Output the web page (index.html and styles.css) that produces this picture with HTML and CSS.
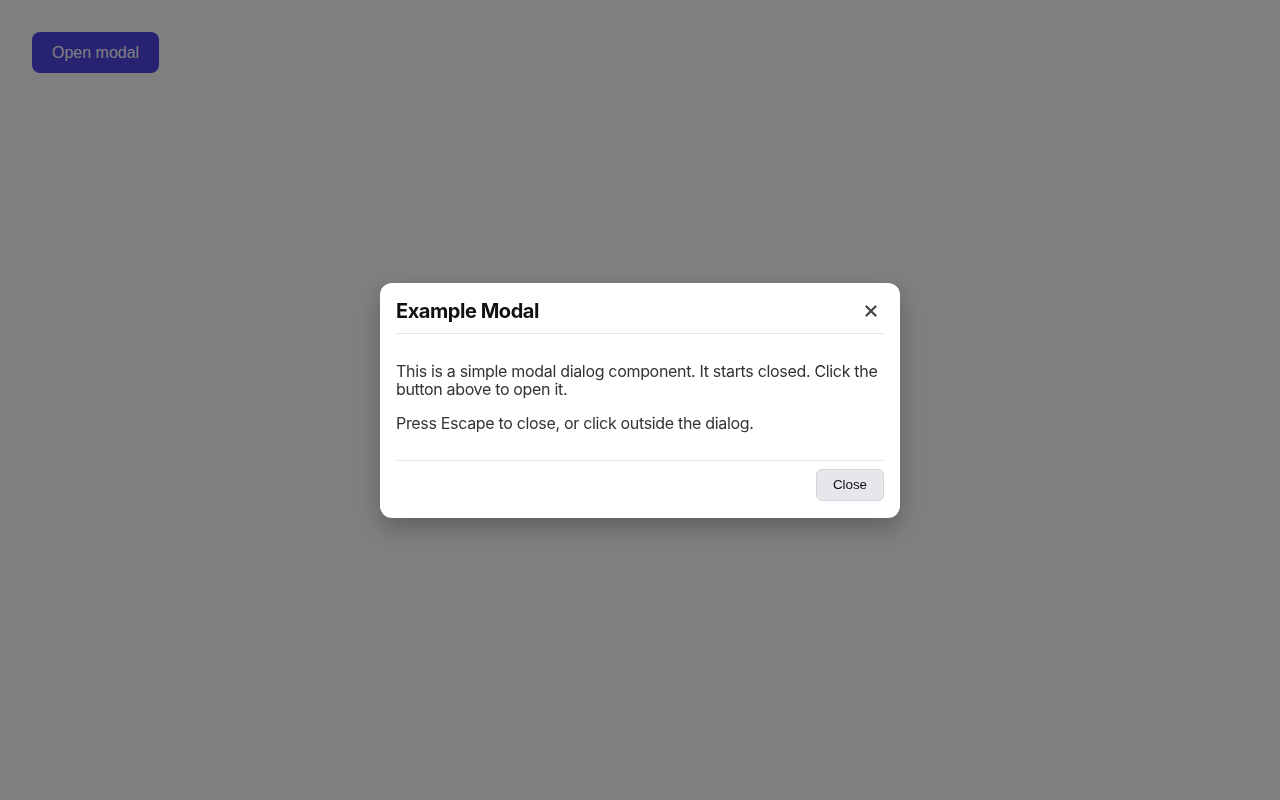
FILE: index.html
```html
<!DOCTYPE html>
<html lang="en">
<head>
<meta charset="utf-8">
<title>Modal</title>
<link rel="stylesheet" href="styles.css">
</head>
<body>
  <div class="page">
    <button class="open-btn" type="button">Open modal</button>
  </div>
  <div class="overlay">
    <div class="modal" role="dialog" aria-labelledby="modal-title">
      <div class="modal-header">
        <h2 id="modal-title" class="modal-title">Example Modal</h2>
        <button class="icon-close" type="button" aria-label="Close">
          <svg width="12" height="12" viewBox="0 0 12 12" aria-hidden="true">
            <path d="M1.5 1.5 L10.5 10.5 M10.5 1.5 L1.5 10.5" stroke="#444" stroke-width="2.2" stroke-linecap="round"/>
          </svg>
        </button>
      </div>
      <div class="modal-body">
        <p>This is a simple modal dialog component. It starts closed. Click the button above to open it.</p>
        <p>Press Escape to close, or click outside the dialog.</p>
      </div>
      <div class="modal-footer">
        <button class="btn-close" type="button">Close</button>
      </div>
    </div>
  </div>
</body>
</html>
```

FILE: styles.css
```css
html, body {
  margin: 0;
  padding: 0;
  height: 100%;
}

body {
  background: #ffffff;
  font-family: Inter, "Noto Sans", "Liberation Sans", sans-serif;
}

.page {
  padding: 32px;
}

.open-btn {
  font-family: "Liberation Sans", Arial, sans-serif;
  font-size: 16px;
  line-height: 19px;
  color: #ffffff;
  background: #4f46e5;
  border: none;
  border-radius: 8px;
  padding: 11px 20px;
  cursor: pointer;
}

.overlay {
  position: fixed;
  inset: 0;
  background: rgba(0, 0, 0, 0.5);
  display: flex;
  align-items: center;
  justify-content: center;
}

.modal {
  width: 520px;
  box-sizing: border-box;
  background: #ffffff;
  border-radius: 12px;
  padding: 16px 16px 17px;
  box-shadow: 0 10px 25px rgba(0, 0, 0, 0.25);
}

.modal-header {
  display: flex;
  align-items: center;
  justify-content: space-between;
  padding-bottom: 10px;
  border-bottom: 1px solid #e5e7eb;
}

.modal-title {
  margin: 0;
  font-size: 20px;
  line-height: 24px;
  font-weight: 700;
  letter-spacing: -0.45px;
  color: #111111;
}

.icon-close {
  display: flex;
  align-items: center;
  justify-content: center;
  width: 24px;
  height: 24px;
  padding: 0;
  margin-right: 1px;
  border: none;
  background: transparent;
  cursor: pointer;
}

.modal-body {
  padding: 12px 0;
  color: #333333;
  font-size: 16px;
  line-height: 18px;
  letter-spacing: -0.32px;
}

.modal-body p {
  margin: 16px 0;
}

.modal-footer {
  display: flex;
  justify-content: flex-end;
  padding-top: 8px;
  border-top: 1px solid #e5e7eb;
}

.btn-close {
  font-family: "Liberation Sans", Arial, sans-serif;
  font-size: 13.33px;
  color: #111111;
  background: #e5e7eb;
  border: 1px solid #d1d5db;
  border-radius: 6px;
  height: 32px;
  width: 68px;
  padding: 0;
  cursor: pointer;
}
```
